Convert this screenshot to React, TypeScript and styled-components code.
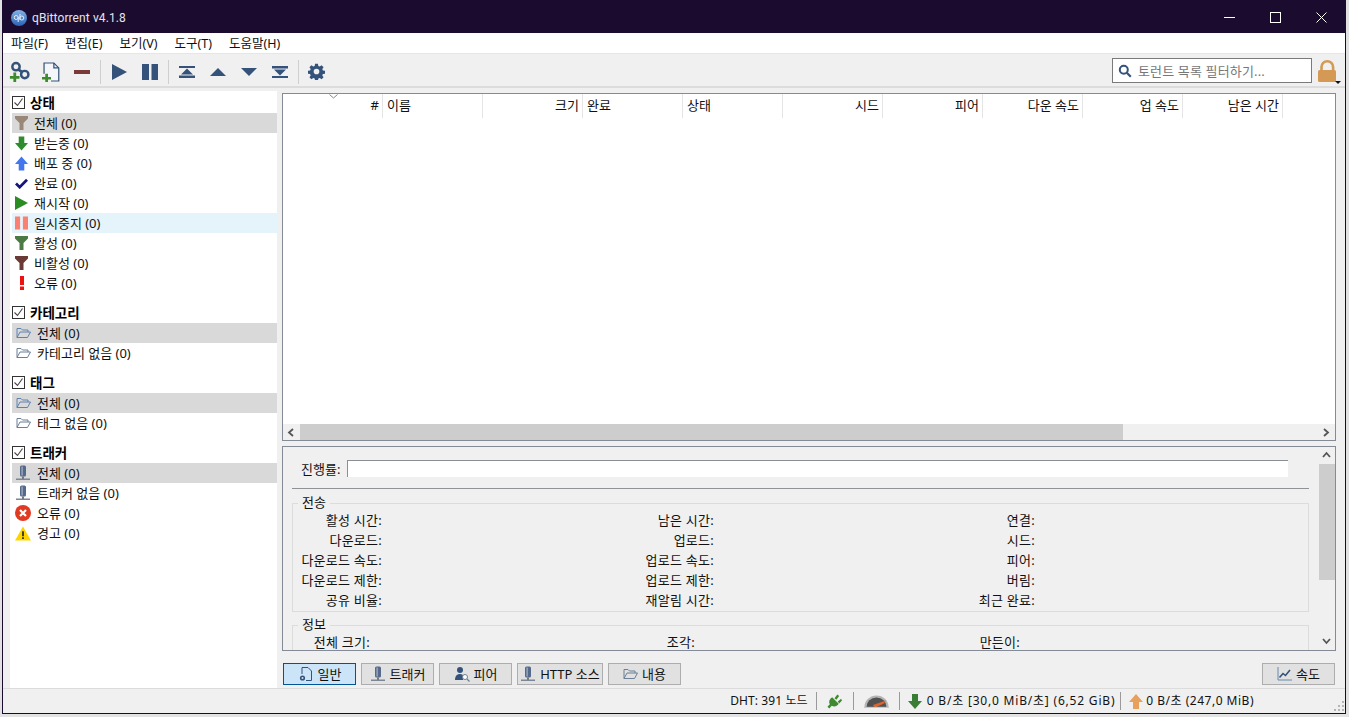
import React from 'react';
import styled, { createGlobalStyle } from 'styled-components';

const Global = createGlobalStyle`
  html, body { margin: 0; padding: 0; background: #e2e2e2; overflow: hidden; }
  * { box-sizing: border-box; }
`;
const FONT = `"Noto Sans", "Noto Sans CJK KR", sans-serif`;

const Win = styled.div`
  width: 1344px; height: 714px; margin: 0 0 0 2px;
  border: 1px solid #1b0c2f; border-top-width: 2px;
  background: #f0f0f0; font: 13px/16px ${FONT}; color: #111;
  display: flex; flex-direction: column; overflow: hidden;
`;
const TitleBar = styled.div`
  height: 31px; background: #1b0c2f; color: #e6e4ea; display: flex; align-items: center; padding: 0 1px 0 8px; flex: none;
`;
const TitleText = styled.span` font: 12px Roboto, sans-serif; margin-left: 5px; flex: 1; letter-spacing: .1px; `;
const WinBtn = styled.div` width: 46px; height: 31px; display: flex; align-items: center; justify-content: center; `;
const MenuBar = styled.div` height: 20px; background: #fff; display: flex; padding-left: 5px; flex: none; `;
const MenuItem = styled.div` padding: 0 3px; margin-right: 11px; line-height: 21px; font-size: 12.500px; white-space: nowrap; `;
const ToolBar = styled.div`
  height: 35px; flex: none; display: flex; align-items: center; padding: 3px 0 0 1px;
  border-top: 1px solid #e6e6e6; border-bottom: 2px solid #dcdcdc;
`;
const ToolBtn = styled.div` width: 31px; height: 30px; display: flex; align-items: center; justify-content: center; flex: none; `;
const ToolSep = styled.div` width: 1px; height: 24px; background: #cfcfcf; margin: 0 2px 0 3px; flex: none; `;
const Grow = styled.div` flex: 1; `;
const Search = styled.div`
  width: 200px; height: 25px; margin-top: -2px; background: #fff; border: 1px solid #7a7a7a; display: flex; align-items: center; padding-left: 5px; gap: 6px; color: #777; white-space: nowrap; flex: none; letter-spacing: .15px;
`;
const LockBox = styled.div` width: 28px; margin: 0 3px 0 2px; height: 30px; display: flex; justify-content: center; align-items: center; flex: none; `;

const Body = styled.div` flex: 1; display: flex; min-height: 0; padding: 3px 8px 0 7px; gap: 5px; `;
const Sidebar = styled.div` width: 267px; height: 597px; background: #fff; padding-top: 1px; flex: none; `;
const Section = styled.div` margin-bottom: 9px; `;
const SecHead = styled.div` height: 21px; display: flex; align-items: center; gap: 5px; padding-left: 2px; font-weight: 700; font-size: 13.500px; color: #000; `;
const Box = styled.div` width: 13px; height: 13px; border: 1px solid #333; background: #fff; display: flex; align-items: center; justify-content: center; `;
const Row = styled.div<{ $sel?: boolean; $hover?: boolean }>`
  height: 20px; display: flex; align-items: center; gap: 6px; padding-left: 3px; margin-left: 2px; white-space: nowrap;
  background: ${p => (p.$sel ? '#d9d9d9' : p.$hover ? '#e5f3fb' : 'transparent')};
`;
const RowIcon = styled.div<{ $w?: number }>` width: ${p => p.$w ?? 16}px; height: 16px; display: flex; align-items: center; justify-content: center; flex: none; `;

const Main = styled.div` width: 1054px; display: flex; flex-direction: column; flex: none; padding-top: 2px; `;
const Table = styled.div` height: 348px; flex: none; background: #fff; border: 1px solid #858b96; display: flex; flex-direction: column; `;
const THead = styled.div` height: 24px; display: flex; position: relative; flex: none; `;
const Sort = styled.div` position: absolute; left: 46px; top: 0; display: flex; `;
const Th = styled.div<{ $left?: boolean }>`
  width: 100px; flex: none; border-right: 1px solid #e5e5e5; padding: 0 3px 2px 4px; display: flex; align-items: center;
  justify-content: ${p => (p.$left ? 'flex-start' : 'flex-end')};
`;
const TBody = styled.div` flex: 1; `;
const HScroll = styled.div` height: 16px; background: #f0f0f0; display: flex; align-items: center; flex: none; `;
const Arrow = styled.div` width: 17px; height: 16px; display: flex; align-items: center; justify-content: center; flex: none; `;
const HTrack = styled.div` flex: 1; height: 16px; display: flex; `;
const HThumb = styled.div` width: 823px; height: 16px; background: #cdcdcd; `;

const Details = styled.div` height: 205px; margin-top: 5px; flex: none; border: 1px solid #858b96; display: flex; overflow: hidden; `;
const DetailInner = styled.div` flex: 1; min-width: 0; padding: 12px 9px 0 9px; overflow: hidden; `;
const ProgressRow = styled.div` height: 19px; display: flex; align-items: center; gap: 7px; padding-left: 9px; padding-right: 21px; white-space: nowrap; `;
const ProgressBar = styled.div` flex: 1; height: 17px; margin-bottom: 1px; background: #fff; border-top: 1px solid #8a8f96; border-left: 1px solid #8a8f96; `;
const Rule = styled.div` height: 1px; background: #8f9398; margin-top: 10px; `;
const Group = styled.div` border: 1px solid #dcdcdc; margin-top: 14px; position: relative; padding: 6px 0 2px; height: 109px; `;
const GroupNext = styled(Group)` margin-top: 13px; `;
const Legend = styled.div` position: absolute; left: 5px; top: -10px; background: #f0f0f0; padding: 0 4px; line-height: 16px; `;
const Grid = styled.div<{ $cols: string }>` display: grid; grid-template-columns: ${p => p.$cols}; grid-auto-rows: 20px; align-items: center; `;
const Lbl = styled.div` text-align: right; white-space: nowrap; letter-spacing: .25px; `;
const VScroll = styled.div` width: 17px; flex: none; display: flex; flex-direction: column; `;
const VArrow = styled.div` height: 17px; display: flex; align-items: center; justify-content: center; flex: none; `;
const VTrack = styled.div` flex: 1; `;
const VThumb = styled.div` height: 116px; background: #cdcdcd; margin-left: 1px; `;

const Tabs = styled.div` height: 22px; margin-top: 12px; display: flex; gap: 5px; padding-left: 1px; padding-right: 1px; flex: none; `;
const TabBtn = styled.div<{ $active?: boolean; $w: number }>`
  width: ${p => p.$w}px; height: 22px; display: flex; align-items: center; justify-content: center; gap: 4px; white-space: nowrap; flex: none;
  background: ${p => (p.$active ? '#cce4f7' : '#e1e1e1')}; border: 1px solid ${p => (p.$active ? '#005499' : '#adadad')};
`;
const Status = styled.div`
  height: 25px; flex: none; margin-top: 3px; border-top: 1px solid #dcdcdc; display: flex; align-items: center; justify-content: flex-end; padding-right: 91px; white-space: nowrap; position: relative; font-size: 12px;
`;
const StatText = styled.span<{ $ls?: number }>` letter-spacing: ${p => p.$ls ?? 0}px; `;
const StatSep = styled.div<{ $ml?: number; $mr?: number }>` width: 1px; height: 18px; background: #9a9a9a; margin: 0 ${p => p.$mr ?? 8}px 0 ${p => p.$ml ?? 8}px; flex: none; `;
const StatIcon = styled.div<{ $w: number; $start?: boolean }>` width: ${p => p.$w}px; display: flex; justify-content: ${p => (p.$start ? 'flex-start' : 'center')}; align-items: center; flex: none; `;
const Grip = styled.div` position: absolute; right: 0; bottom: 0; display: flex; `;

const Navy = '#34527a';
const Link = () => (
  <svg width="21" height="21" viewBox="0 0 24 24">
    <circle cx="8" cy="6.500" r="4.200" fill="none" stroke={Navy} strokeWidth="2.800" />
    <circle cx="18" cy="15.500" r="4.200" fill="none" stroke={Navy} strokeWidth="2.800" />
    <path d="M10.500 9.500l5 3.500" stroke={Navy} strokeWidth="3.200" />
    <path d="M5 13v4H1v3.200h4V24h3.200v-3.800H12V17H8.200v-4z" fill="#3d8b2e" />
  </svg>
);
const AddFile = () => (
  <svg width="18" height="20" viewBox="0 0 22 24">
    <path d="M2.500 14V1h12l6 6v16H11" fill="#f4f6f9" stroke={Navy} strokeWidth="1.500" />
    <path d="M14.500 1v6h6" fill="none" stroke={Navy} strokeWidth="1.500" />
    <path d="M4 14v4H0v3.200h4V25h3.300v-3.800H11V18H7.300v-4z" fill="#3d8b2e" />
  </svg>
);
const Top = () => (
  <svg width="16" height="12" viewBox="0 0 16 12"><path d="M0 0h16v2H0zM8 2.500l6 6H2zM0 9.500h16V12H0z" fill={Navy} /></svg>
);
const Bottom = () => (
  <svg width="16" height="12" viewBox="0 0 16 12"><path d="M0 0h16v2.500H0zM2 3.500h12l-6 6zM0 10h16v2H0z" fill={Navy} /></svg>
);
const Gear = () => (
  <svg width="17" height="17" viewBox="0 0 24 24">
    <path fill={Navy} fillRule="evenodd" d="M10 1h4l.6 3.100 2 .8 2.600-1.800 2.800 2.800-1.800 2.600.8 2 3 .5v4l-3 .6-.8 2 1.800 2.600-2.800 2.800-2.600-1.800-2 .8-.6 3h-4l-.6-3-2-.8-2.600 1.800-2.800-2.800 1.800-2.600-.8-2-3-.6v-4l3-.5.8-2L2 5.900l2.800-2.800 2.600 1.800 2-.8zM12 8a4 4 0 100 8 4 4 0 000-8z" />
  </svg>
);
const Magnifier = () => (
  <svg width="14" height="14" viewBox="0 0 14 14"><circle cx="5.800" cy="5.800" r="4" fill="none" stroke={Navy} strokeWidth="2" /><path d="M8.800 8.800l4 4" stroke={Navy} strokeWidth="2.200" /></svg>
);
const Lock = () => (
  <svg width="26" height="26" viewBox="0 0 26 26">
    <path d="M6.500 12V8a5.800 5.800 0 0111.600 0v4" fill="none" stroke="#d49a55" strokeWidth="2.600" />
    <rect x="3" y="11" width="18" height="12" rx="1.500" fill="#d49a55" />
    <path d="M20 22h6l-3 3z" fill="#111" />
  </svg>
);
const Funnel = ({ c }: { c: string }) => (
  <svg width="13" height="14" viewBox="0 0 13 14"><path d="M0 0h13v2.500L8.500 7v7h-4V7L0 2.500z" fill={c} /></svg>
);
const ArrowDown = ({ c = '#2e8b2e', w = 13 }: { c?: string; w?: number }) => (
  <svg width={w} height="15" viewBox="0 0 14 15"><path d="M4 0h6v7h4l-7 8-7-8h4z" fill={c} /></svg>
);
const ArrowUp = ({ c = '#4477ee', w = 13 }: { c?: string; w?: number }) => (
  <svg width={w} height="15" viewBox="0 0 14 15"><path d="M4 15h6V8h4L7 0 0 8h4z" fill={c} /></svg>
);
const Check = () => (
  <svg width="13" height="11" viewBox="0 0 14 12"><path d="M1 6l4 4 8-8" fill="none" stroke="#15157a" strokeWidth="3" /></svg>
);
const PlayG = () => (
  <svg width="13" height="14" viewBox="0 0 13 14"><path d="M0 0l13 7-13 7z" fill="#2a8c22" /></svg>
);
const PauseR = () => (
  <svg width="13" height="14" viewBox="0 0 14 14"><path d="M0 0h5.500v14H0zM8.500 0H14v14H8.500z" fill="#fa8072" /></svg>
);
const Exclaim = () => (
  <svg width="4" height="14" viewBox="0 0 4 14"><path d="M0 0h4v9H0zM0 10.500h4V14H0z" fill="#ee1111" /></svg>
);
const Folder = ({ c = '#6b7f97' }: { c?: string }) => (
  <svg width="15" height="12" viewBox="0 0 15 12" fill="none" stroke={c} strokeWidth="1">
    <path d="M1 10.500V1.500h4l1.500 1.500h5.500v2" />
    <path d="M1 10.500h10.500l3-5.500H4z" />
  </svg>
);
const Mic = ({ c = '#55698a' }: { c?: string }) => (
  <svg width="16" height="16" viewBox="0 0 16 16">
    <rect x="5" y="0.500" width="6" height="11" rx="1.500" fill={c} />
    <rect x="6.500" y="1.500" width="1.200" height="9" fill="#a9b5c6" />
    <path d="M7 11.500h2v2.500H7z" fill="#777" />
    <path d="M1 13.500h14v1.500H1z" fill="#7b8794" />
  </svg>
);
const ErrIcon = () => (
  <svg width="16" height="16" viewBox="0 0 16 16"><circle cx="8" cy="8" r="8" fill="#e03a22" /><path d="M5 5l6 6M11 5l-6 6" stroke="#fff" strokeWidth="2.200" /></svg>
);
const Warn = () => (
  <svg width="16" height="15" viewBox="0 0 17 15"><path d="M8.500 0L17 15H0z" fill="#fdd500" /><path d="M7.700 5h1.600v5.500H7.700zM7.700 11.500h1.600v1.800H7.700z" fill="#111" /></svg>
);
const Chev = ({ d }: { d: 'l' | 'r' | 'u' | 'd' }) => {
  const p = { l: 'M6 1L2 4.500 6 8', r: 'M2 1l4 3.500L2 8', u: 'M1 6l3.500-4L8 6', d: 'M1 2l3.500 4L8 2' }[d];
  return <svg width="9" height="9" viewBox="0 0 9 9"><path d={p} fill="none" stroke="#555" strokeWidth="1.800" /></svg>;
};
const TabGear = () => (
  <svg width="16" height="16" viewBox="0 0 16 16">
    <path d="M4 8V1.500h6l3.500 3.500v9.500H8" fill="none" stroke={Navy} strokeWidth="1" />
    <circle cx="4.500" cy="12" r="2.600" fill={Navy} /><circle cx="4.500" cy="12" r="1" fill="#cce4f7" />
  </svg>
);
const PeerIcon = () => (
  <svg width="16" height="16" viewBox="0 0 16 16">
    <circle cx="6" cy="4" r="3" fill={Navy} /><path d="M1 14c0-4 2-6 5-6 2 0 3 .8 3 2v4z" fill={Navy} />
    <circle cx="11" cy="11" r="2.500" fill="#fff" stroke="#6b7f97" /><path d="M13 13l2.500 2.500" stroke="#6b7f97" strokeWidth="1.200" />
  </svg>
);
const Chart = () => (
  <svg width="15" height="14" viewBox="0 0 15 14" fill="none">
    <path d="M1 0v13h14" stroke="#6b89b0" />
    <path d="M2.500 10.500L6 6.500l2.500 2L13 3" stroke={Navy} strokeWidth="1.600" />
  </svg>
);
const Plug = () => (
  <svg width="15" height="15" viewBox="0 0 16 16" fill="#3f8a2f">
    <path d="M5.500 3.500l7 7c-2 3-5 3.500-7.500 2L2.500 15.500 0.500 13.500l2.500-2.500C1.500 8.500 2.500 5.500 5.500 3.500z" />
    <path d="M8 4.500L11 .5l2 1.500-3 4zM11.500 8l3.500-3 1 2-3 3z" />
  </svg>
);
const Gauge = () => (
  <svg width="25" height="13" viewBox="0 0 25 13">
    <path d="M.5 12A12 11.500 0 0124.500 12z" fill="#b4b4b4" />
    <path d="M2.500 12a10 9.500 0 0120 0z" fill="#505050" />
    <path d="M9 10l13-4.500-2 3-9 4z" fill="#e0622a" />
    <path d="M0 11.800h25V13H0z" fill="#c8c8c8" />
  </svg>
);
const Resize = () => (
  <svg width="12" height="12" viewBox="0 0 12 12" fill="#b5b5b5">
    <path d="M9 0h2v2H9zM5 4h2v2H5zM9 4h2v2H9zM1 8h2v2H1zM5 8h2v2H5zM9 8h2v2H9z" />
  </svg>
);

const Tick = () => <svg width="11" height="11" viewBox="0 0 11 11"><path d="M1.500 5.500l3 3 5-7" fill="none" stroke="#444" strokeWidth="1.100" /></svg>;

const Sec = ({ title, children }: { title: string; children: React.ReactNode }) => (
  <Section>
    <SecHead><Box><Tick /></Box>{title}</SecHead>
    {children}
  </Section>
);

const cols = ['#', '이름', '크기', '완료', '상태', '시드', '피어', '다운 속도', '업 속도', '남은 시간'];
const leftCols = new Set(['이름', '완료', '상태']);

const xfer = [
  ['활성 시간:', '남은 시간:', '연결:'],
  ['다운로드:', '업로드:', '시드:'],
  ['다운로드 속도:', '업로드 속도:', '피어:'],
  ['다운로드 제한:', '업로드 제한:', '버림:'],
  ['공유 비율:', '재알림 시간:', '최근 완료:'],
];

const Triple = ({ labels }: { labels: string[] }) => (
  <>
    <Lbl>{labels[0]}</Lbl><span />
    <Lbl>{labels[1]}</Lbl><span />
    <Lbl>{labels[2]}</Lbl><span />
  </>
);

export default function App() {
  return (
    <>
      <Global />
      <Win>
        <TitleBar>
          <svg width="16" height="16" viewBox="0 0 16 16">
            <defs><linearGradient id="qb" x1="0" y1="0" x2="0" y2="1"><stop offset="0" stopColor="#86b2e6" /><stop offset="1" stopColor="#2a62b4" /></linearGradient></defs>
            <circle cx="8" cy="8" r="8" fill="url(#qb)" />
            <circle cx="5.200" cy="7.500" r="2" fill="none" stroke="#e4eefa" strokeWidth="1" />
            <path d="M7.200 7v5M9 4v6" stroke="#e4eefa" strokeWidth="1" />
            <circle cx="10.800" cy="8" r="2" fill="none" stroke="#e4eefa" strokeWidth="1" />
          </svg>
          <TitleText>qBittorrent v4.1.8</TitleText>
          <WinBtn><svg width="11" height="11" viewBox="0 0 11 11"><path d="M0 5.500h11" stroke="#fff" /></svg></WinBtn>
          <WinBtn><svg width="11" height="11" viewBox="0 0 11 11"><rect x=".5" y=".5" width="10" height="10" fill="none" stroke="#fff" /></svg></WinBtn>
          <WinBtn><svg width="11" height="11" viewBox="0 0 11 11"><path d="M.5.500l10 10M10.500.500l-10 10" stroke="#fff" /></svg></WinBtn>
        </TitleBar>
        <MenuBar>
          {['파일(F)', '편집(E)', '보기(V)', '도구(T)', '도움말(H)'].map(m => <MenuItem key={m}>{m}</MenuItem>)}
        </MenuBar>
        <ToolBar>
          <ToolBtn><Link /></ToolBtn>
          <ToolBtn><AddFile /></ToolBtn>
          <ToolBtn><svg width="16" height="4" viewBox="0 0 16 4"><rect width="16" height="4" fill="#7a3a3a" /></svg></ToolBtn>
          <ToolSep />
          <ToolBtn><svg width="16" height="16" viewBox="0 0 16 16"><path d="M1 0l15 8-15 8z" fill={Navy} /></svg></ToolBtn>
          <ToolBtn><svg width="16" height="16" viewBox="0 0 16 16"><path d="M0 0h7v16H0zM9.500 0H16v16H9.500z" fill={Navy} /></svg></ToolBtn>
          <ToolSep />
          <ToolBtn><Top /></ToolBtn>
          <ToolBtn><svg width="16" height="8" viewBox="0 0 16 8"><path d="M8 0l8 8H0z" fill={Navy} /></svg></ToolBtn>
          <ToolBtn><svg width="16" height="8" viewBox="0 0 16 8"><path d="M0 0h16L8 8z" fill={Navy} /></svg></ToolBtn>
          <ToolBtn><Bottom /></ToolBtn>
          <ToolSep />
          <ToolBtn><Gear /></ToolBtn>
          <Grow />
          <Search><Magnifier />토런트 목록 필터하기...</Search>
          <LockBox><Lock /></LockBox>
        </ToolBar>
        <Body>
          <Sidebar>
            <Sec title="상태">
              <Row $sel><RowIcon $w={13}><Funnel c="#998877" /></RowIcon>전체 (0)</Row>
              <Row><RowIcon $w={13}><ArrowDown /></RowIcon>받는중 (0)</Row>
              <Row><RowIcon $w={13}><ArrowUp /></RowIcon>배포 중 (0)</Row>
              <Row><RowIcon $w={13}><Check /></RowIcon>완료 (0)</Row>
              <Row><RowIcon $w={13}><PlayG /></RowIcon>재시작 (0)</Row>
              <Row $hover><RowIcon $w={13}><PauseR /></RowIcon>일시중지 (0)</Row>
              <Row><RowIcon $w={13}><Funnel c="#4c7a44" /></RowIcon>활성 (0)</Row>
              <Row><RowIcon $w={13}><Funnel c="#6b3a36" /></RowIcon>비활성 (0)</Row>
              <Row><RowIcon $w={13}><Exclaim /></RowIcon>오류 (0)</Row>
            </Sec>
            <Sec title="카테고리">
              <Row $sel><RowIcon><Folder c="#5f82ad" /></RowIcon>전체 (0)</Row>
              <Row><RowIcon><Folder /></RowIcon>카테고리 없음 (0)</Row>
            </Sec>
            <Sec title="태그">
              <Row $sel><RowIcon><Folder c="#5f82ad" /></RowIcon>전체 (0)</Row>
              <Row><RowIcon><Folder /></RowIcon>태그 없음 (0)</Row>
            </Sec>
            <Sec title="트래커">
              <Row $sel><RowIcon><Mic /></RowIcon>전체 (0)</Row>
              <Row><RowIcon><Mic /></RowIcon>트래커 없음 (0)</Row>
              <Row><RowIcon><ErrIcon /></RowIcon>오류 (0)</Row>
              <Row><RowIcon><Warn /></RowIcon>경고 (0)</Row>
            </Sec>
          </Sidebar>
          <Main>
            <Table>
              <THead>
                <Sort><svg width="9" height="5" viewBox="0 0 9 5"><path d="M.5.500l4 3.500 4-3.500" fill="none" stroke="#888" /></svg></Sort>
                {cols.map(c => <Th key={c} $left={leftCols.has(c)}>{c}</Th>)}
              </THead>
              <TBody />
              <HScroll>
                <Arrow><Chev d="l" /></Arrow>
                <HTrack><HThumb /></HTrack>
                <Arrow><Chev d="r" /></Arrow>
              </HScroll>
            </Table>
            <Details>
              <DetailInner>
                <ProgressRow><span>진행률:</span><ProgressBar /></ProgressRow>
                <Rule />
                <Group>
                  <Legend>전송</Legend>
                  <Grid $cols="89px 242px 90px 231px 90px 1fr">
                    {xfer.map(r => <Triple key={r[0]} labels={r} />)}
                  </Grid>
                </Group>
                <GroupNext>
                  <Legend>정보</Legend>
                  <Grid $cols="77px 235px 90px 235px 90px 1fr">
                    <Triple labels={['전체 크기:', '조각:', '만든이:']} />
                  </Grid>
                </GroupNext>
              </DetailInner>
              <VScroll>
                <VArrow><Chev d="u" /></VArrow>
                <VThumb />
                <VTrack />
                <VArrow><Chev d="d" /></VArrow>
              </VScroll>
            </Details>
            <Tabs>
              <TabBtn $active $w={73}><TabGear />일반</TabBtn>
              <TabBtn $w={73}><Mic />트래커</TabBtn>
              <TabBtn $w={73}><PeerIcon />피어</TabBtn>
              <TabBtn $w={86}><Mic />HTTP 소스</TabBtn>
              <TabBtn $w={73}><Folder />내용</TabBtn>
              <Grow />
              <TabBtn $w={73}><Chart />속도</TabBtn>
            </Tabs>
          </Main>
        </Body>
        <Status>
          <StatText $ls={0.1}>DHT: 391 노드</StatText>
          <StatSep />
          <StatIcon $w={20}><Plug /></StatIcon>
          <StatSep />
          <StatIcon $w={29}><Gauge /></StatIcon>
          <StatSep />
          <StatIcon $w={19} $start><ArrowDown c="#3a7d34" w={14} /></StatIcon>
          <StatText $ls={0.8}>0 B/초 [30,0 MiB/초] (6,52 GiB)</StatText>
          <StatSep $ml={5} $mr={5} />
          <StatIcon $w={20}><ArrowUp c="#e8a15c" w={14} /></StatIcon>
          <StatText $ls={0.5}>0 B/초 (247,0 MiB)</StatText>
          <Grip><Resize /></Grip>
        </Status>
      </Win>
    </>
  );
}
